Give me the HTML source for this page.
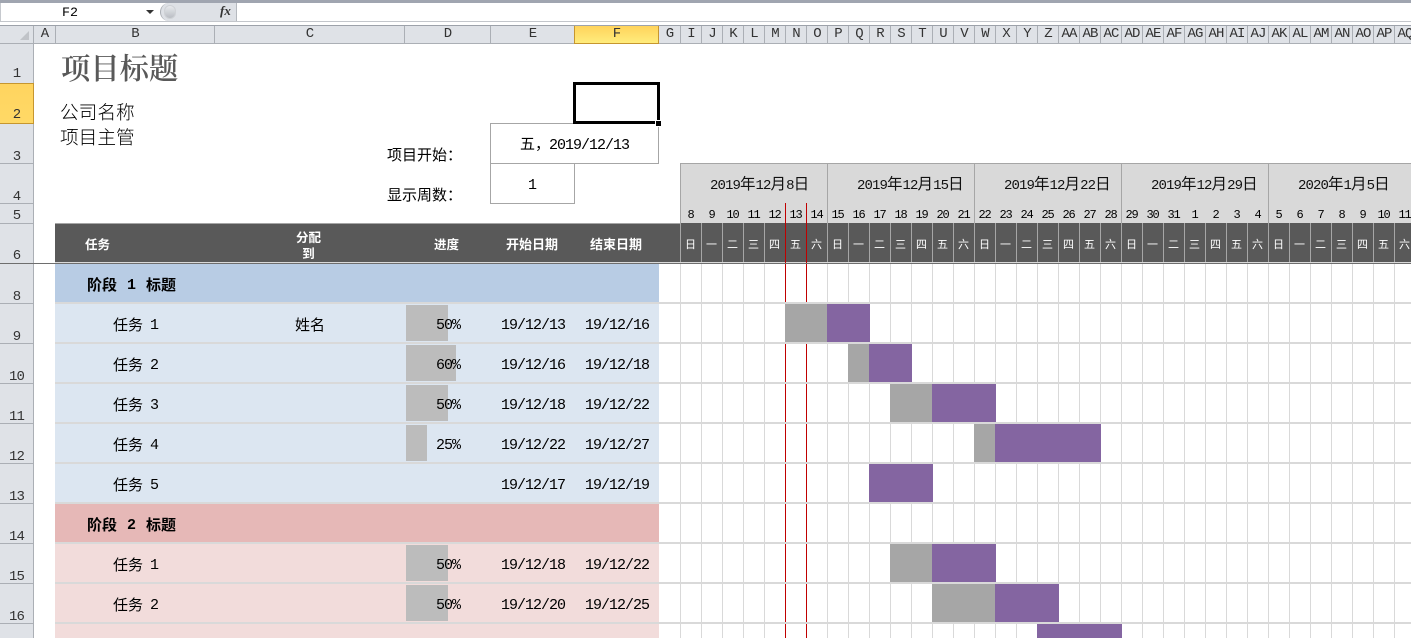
<!DOCTYPE html>
<html lang="zh-CN"><head><meta charset="utf-8"><title>项目标题</title>
<style>
html{margin:0;padding:0;width:1411px;height:638px;overflow:hidden;background:#fff}
body{margin:0;padding:0;background:#fff;width:1411px;height:638px;overflow:hidden;position:relative;font-family:"Liberation Sans","Noto Sans CJK SC",sans-serif;color:#000}
div,span{box-sizing:border-box}
.a{position:absolute}
.t{position:absolute;white-space:nowrap;font-family:"Noto Sans CJK SC",sans-serif;font-size:15px;line-height:20px;font-weight:400;z-index:6}
.m{font-family:"Liberation Mono",monospace;font-size:15px;letter-spacing:-1px}
.d{position:absolute;white-space:nowrap;font-family:"Liberation Mono",monospace;font-size:15px;letter-spacing:-1px;line-height:20px;z-index:6;margin-top:1px}
.r{position:absolute;left:0;width:33px;text-align:center;font-family:"Liberation Mono",monospace;font-size:14px;letter-spacing:-.9px;line-height:16px;color:#333;z-index:6}
.c{position:absolute;top:26px;height:17px;text-align:center;font-family:"Liberation Mono",monospace;font-size:14px;letter-spacing:-.9px;line-height:17px;color:#333;border-left:1px solid #abafb5;z-index:6}
.hl{position:absolute;left:0;width:33px;height:1px;background:#abafb5;z-index:5}
.row{position:absolute;display:flex;left:680px;width:735px}
.row span{flex:0 0 21px;width:21px;text-align:center}
.cols{top:26px;height:17px;font-family:"Liberation Mono",monospace;font-size:14px;letter-spacing:-.9px;line-height:17px;color:#333;z-index:6}
.cols span{border-left:1px solid #abafb5}
.days{top:206px;height:18px;font-family:"Liberation Mono",monospace;font-size:12px;letter-spacing:-1.2px;line-height:18px;z-index:6}
.dow{top:235px;height:18px;font-family:"Noto Sans CJK SC",sans-serif;font-size:11px;line-height:18px;color:#fff;z-index:6}
.hd{color:#fff;font-weight:700;font-size:12.5px}
.ph{font-weight:700}
.band{position:absolute;left:55px;width:604px;height:38px}
.sep{position:absolute;left:55px;width:1356px;height:2px;background:#d9d9d9;z-index:3}
.pb{position:absolute;left:406px;height:36px;background:#bcbcbc;z-index:4}
.g{position:absolute;height:38px;background:#a6a6a6;z-index:4}
.p{position:absolute;height:38px;background:#8465a1;z-index:4}
.wk{position:absolute;top:163px;width:1px;height:60px;background:#a6a6a6;z-index:2}
.wl{position:absolute;top:173px;white-space:nowrap;font-family:"Noto Sans CJK SC",sans-serif;font-size:15.5px;line-height:20px;z-index:6;color:#111}
.wl i{font-style:normal;font-family:"Liberation Mono",monospace;font-size:14px;letter-spacing:-.9px}
</style></head><body>

<!-- top chrome -->
<div class="a" style="left:0;top:0;width:1411px;height:3px;background:#a0a5b0"></div>
<div class="a" style="left:0;top:3px;width:1px;height:18px;background:#c6c9ce"></div>
<div class="t" style="left:62px;top:4px;font-family:'Liberation Mono',monospace;font-size:13.33px;">F2</div>
<svg class="a" style="left:146px;top:10px" width="9" height="5"><polygon points="0,0 8,0 4,4" fill="#333"/></svg>
<div class="a" style="left:160px;top:3px;width:77px;height:18px;background:#dee1e6;border-right:1px solid #b5b9bf;border-radius:9px 0 0 9px;border-left:1px solid #a9adb3"></div>
<div class="a" style="left:164px;top:5px;width:12px;height:14px;border-radius:7px;background:linear-gradient(#e8eaed,#b9bdc3);border:1px solid #cfd2d6"></div>
<div class="t" style="left:220px;top:1px;font-family:'Liberation Serif',serif;font-style:italic;font-weight:700;font-size:13px;color:#333">fx</div>
<div class="a" style="left:0;top:21px;width:1411px;height:1px;background:#c3c6cb"></div>
<div class="a" style="left:0;top:25px;width:1411px;height:1px;background:#9da2aa"></div>

<!-- column header -->
<div class="a" style="left:0;top:26px;width:1411px;height:17px;background:#dfe2e7"></div>
<div class="a" style="left:0;top:43px;width:1411px;height:1px;background:#abafb5;z-index:5"></div>
<svg class="a" style="left:0;top:26px;z-index:6" width="33" height="17"><polygon points="29,5 29,14 20,14" fill="#c0c3c8"/></svg>
<div class="c" style="left:33px;width:22px">A</div>
<div class="c" style="left:55px;width:159px">B</div>
<div class="c" style="left:214px;width:190px">C</div>
<div class="c" style="left:404px;width:86px">D</div>
<div class="c" style="left:490px;width:84px">E</div>
<div class="c" style="left:574px;width:85px;background:linear-gradient(#ffd35c,#ffec7c);border:1px solid #c6962f;border-top:0;height:18px;color:#333">F</div>
<div class="c" style="left:659px;width:21px;border-left:0">G</div>
<div class="a" style="left:680px;top:26px;width:1px;height:17px;background:#abafb5;z-index:6"></div>
<div class="row cols"><span>I</span><span>J</span><span>K</span><span>L</span><span>M</span><span>N</span><span>O</span><span>P</span><span>Q</span><span>R</span><span>S</span><span>T</span><span>U</span><span>V</span><span>W</span><span>X</span><span>Y</span><span>Z</span><span>AA</span><span>AB</span><span>AC</span><span>AD</span><span>AE</span><span>AF</span><span>AG</span><span>AH</span><span>AI</span><span>AJ</span><span>AK</span><span>AL</span><span>AM</span><span>AN</span><span>AO</span><span>AP</span><span>AQ</span></div>

<!-- row header -->
<div class="a" style="left:0;top:44px;width:33px;height:594px;background:#dfe2e7"></div>
<div class="a" style="left:33px;top:44px;width:1px;height:594px;background:#abafb5;z-index:5"></div>
<div class="a" style="left:0;top:83px;width:34px;height:41px;background:linear-gradient(#ffd45f,#ffd966);border:1px solid #c6962f;border-left:0;z-index:5"></div>
<div class="hl" style="top:163px"></div><div class="hl" style="top:203px"></div><div class="hl" style="top:223px"></div>
<div class="hl" style="top:303px"></div><div class="hl" style="top:343px"></div><div class="hl" style="top:383px"></div><div class="hl" style="top:423px"></div><div class="hl" style="top:463px"></div><div class="hl" style="top:503px"></div><div class="hl" style="top:543px"></div><div class="hl" style="top:583px"></div><div class="hl" style="top:623px"></div>
<div class="r" style="top:66px">1</div>
<div class="r" style="top:107px">2</div>
<div class="r" style="top:149px">3</div>
<div class="r" style="top:189px">4</div>
<div class="r" style="top:208px">5</div>
<div class="r" style="top:248px">6</div>
<div class="r" style="top:289px">8</div>
<div class="r" style="top:329px">9</div>
<div class="r" style="top:369px">10</div>
<div class="r" style="top:409px">11</div>
<div class="r" style="top:449px">12</div>
<div class="r" style="top:489px">13</div>
<div class="r" style="top:529px">14</div>
<div class="r" style="top:569px">15</div>
<div class="r" style="top:609px">16</div>

<!-- title block -->
<div class="t" style="left:61px;top:48px;font-family:'Noto Serif CJK SC',serif;font-size:29.33px;line-height:38px;color:#595959;font-weight:600">项目标题</div>
<div class="t" style="left:60px;top:100px;font-size:18.67px;line-height:24px;font-weight:300">公司名称</div>
<div class="t" style="left:60px;top:125px;font-size:18.67px;line-height:24px;font-weight:300">项目主管</div>
<div class="t" style="left:387px;top:145px;font-size:15px">项目开始：</div>
<div class="t" style="left:387px;top:185px;font-size:15px">显示周数：</div>

<div class="a" style="left:490px;top:123px;width:169px;height:41px;border:1px solid #a6a6a6"></div>
<div class="a" style="left:490px;top:163px;width:85px;height:41px;border:1px solid #a6a6a6"></div>
<div class="t" style="left:520px;top:134px;font-size:15px">五，<span class="m" style="margin-left:-1px">2019/12/13</span></div>
<div class="d" style="left:528px;top:175px">1</div>

<!-- selection -->
<div class="a" style="left:573px;top:82px;width:87px;height:42px;border:3px solid #000;z-index:8"></div>
<div class="a" style="left:655px;top:120px;width:7px;height:7px;background:#000;border:1px solid #fff;z-index:9"></div>

<!-- week header -->
<div class="a" style="left:680px;top:163px;width:731px;height:60px;background:#d9d9d9;border-top:1px solid #a6a6a6"></div>
<div class="wk" style="left:680px"></div><div class="wk" style="left:827px"></div><div class="wk" style="left:974px"></div><div class="wk" style="left:1121px"></div><div class="wk" style="left:1268px"></div>
<div class="wl" style="left:710px"><i>2019</i>年<i>12</i>月<i>8</i>日</div>
<div class="wl" style="left:857px"><i>2019</i>年<i>12</i>月<i>15</i>日</div>
<div class="wl" style="left:1004px"><i>2019</i>年<i>12</i>月<i>22</i>日</div>
<div class="wl" style="left:1151px"><i>2019</i>年<i>12</i>月<i>29</i>日</div>
<div class="wl" style="left:1298px"><i>2020</i>年<i>1</i>月<i>5</i>日</div>
<div class="row days"><span>8</span><span>9</span><span>10</span><span>11</span><span>12</span><span>13</span><span>14</span><span>15</span><span>16</span><span>17</span><span>18</span><span>19</span><span>20</span><span>21</span><span>22</span><span>23</span><span>24</span><span>25</span><span>26</span><span>27</span><span>28</span><span>29</span><span>30</span><span>31</span><span>1</span><span>2</span><span>3</span><span>4</span><span>5</span><span>6</span><span>7</span><span>8</span><span>9</span><span>10</span><span>11</span></div>

<!-- dark header -->
<div class="a" style="left:55px;top:223px;width:625px;height:39px;background:#595959;border-top:1px solid #a6a6a6"></div>
<div class="a" style="left:680px;top:223px;width:731px;height:39px;background:#595959"></div>
<div class="a" style="left:680px;top:223px;width:731px;height:39px;background:repeating-linear-gradient(to right,#a6a6a6 0,#a6a6a6 1px,transparent 1px,transparent 21px);z-index:1"></div>
<div class="a" style="left:55px;top:262px;width:1356px;height:1px;background:#d9d9d9"></div>
<div class="a" style="left:0;top:263px;width:1411px;height:1px;background:#6e6e6e;z-index:5"></div>
<div class="t hd" style="left:85px;top:234px">任务</div>
<div class="t hd" style="left:296px;top:229px;line-height:16px;text-align:center;font-size:12.5px">分配<br>到</div>
<div class="t hd" style="left:434px;top:234px">进度</div>
<div class="t hd" style="left:506px;top:234px;font-size:13px">开始日期</div>
<div class="t hd" style="left:590px;top:234px;font-size:13px">结束日期</div>
<div class="row dow"><span>日</span><span>一</span><span>二</span><span>三</span><span>四</span><span>五</span><span>六</span><span>日</span><span>一</span><span>二</span><span>三</span><span>四</span><span>五</span><span>六</span><span>日</span><span>一</span><span>二</span><span>三</span><span>四</span><span>五</span><span>六</span><span>日</span><span>一</span><span>二</span><span>三</span><span>四</span><span>五</span><span>六</span><span>日</span><span>一</span><span>二</span><span>三</span><span>四</span><span>五</span><span>六</span></div>

<!-- grid -->
<div class="a" style="left:680px;top:264px;width:731px;height:374px;background:repeating-linear-gradient(to right,#d9d9d9 0,#d9d9d9 1px,transparent 1px,transparent 21px)"></div>
<div class="a" style="left:785px;top:203px;width:1px;height:435px;background:#c00000;z-index:2"></div>
<div class="a" style="left:806px;top:203px;width:1px;height:435px;background:#c00000;z-index:2"></div>

<!-- bands -->
<div class="band" style="top:264px;background:#b8cce4"></div>
<div class="band" style="top:304px;background:#dce6f1"></div>
<div class="band" style="top:344px;background:#dce6f1"></div>
<div class="band" style="top:384px;background:#dce6f1"></div>
<div class="band" style="top:424px;background:#dce6f1"></div>
<div class="band" style="top:464px;background:#dce6f1"></div>
<div class="band" style="top:504px;background:#e6b8b7"></div>
<div class="band" style="top:544px;background:#f2dcdb"></div>
<div class="band" style="top:584px;background:#f2dcdb"></div>
<div class="band" style="top:624px;background:#f2dcdb;height:14px"></div>

<div class="sep" style="top:302px"></div><div class="sep" style="top:342px"></div><div class="sep" style="top:382px"></div><div class="sep" style="top:422px"></div><div class="sep" style="top:462px"></div><div class="sep" style="top:502px"></div><div class="sep" style="top:542px"></div><div class="sep" style="top:582px"></div><div class="sep" style="top:622px"></div>

<!-- progress bars -->
<div class="pb" style="top:305px;width:42px"></div>
<div class="pb" style="top:345px;width:50px"></div>
<div class="pb" style="top:385px;width:42px"></div>
<div class="pb" style="top:425px;width:21px"></div>
<div class="pb" style="top:545px;width:42px"></div>
<div class="pb" style="top:585px;width:42px"></div>

<!-- gantt bars -->
<div class="g" style="top:304px;left:785px;width:42px"></div><div class="p" style="top:304px;left:827px;width:43px"></div>
<div class="g" style="top:344px;left:848px;width:21px"></div><div class="p" style="top:344px;left:869px;width:43px"></div>
<div class="g" style="top:384px;left:890px;width:42px"></div><div class="p" style="top:384px;left:932px;width:64px"></div>
<div class="g" style="top:424px;left:974px;width:21px"></div><div class="p" style="top:424px;left:995px;width:106px"></div>
<div class="p" style="top:464px;left:869px;width:64px"></div>
<div class="g" style="top:544px;left:890px;width:42px"></div><div class="p" style="top:544px;left:932px;width:64px"></div>
<div class="g" style="top:584px;left:932px;width:63px"></div><div class="p" style="top:584px;left:995px;width:64px"></div>
<div class="p" style="top:624px;left:1037px;width:85px;height:14px"></div>

<!-- phase titles -->
<div class="t ph" style="left:87px;top:275px">阶段</div><div class="d ph" style="left:127px;top:275px">1</div><div class="t ph" style="left:146px;top:275px">标题</div>
<div class="t ph" style="left:87px;top:515px">阶段</div><div class="d ph" style="left:127px;top:515px">2</div><div class="t ph" style="left:146px;top:515px">标题</div>

<!-- tasks -->
<div class="t" style="left:113px;top:315px">任务</div><div class="d" style="left:150px;top:315px">1</div><div class="t" style="left:295px;top:315px">姓名</div><div class="d" style="left:436px;top:315px">50%</div><div class="d" style="left:501px;top:315px">19/12/13</div><div class="d" style="left:585px;top:315px">19/12/16</div>
<div class="t" style="left:113px;top:355px">任务</div><div class="d" style="left:150px;top:355px">2</div><div class="d" style="left:436px;top:355px">60%</div><div class="d" style="left:501px;top:355px">19/12/16</div><div class="d" style="left:585px;top:355px">19/12/18</div>
<div class="t" style="left:113px;top:395px">任务</div><div class="d" style="left:150px;top:395px">3</div><div class="d" style="left:436px;top:395px">50%</div><div class="d" style="left:501px;top:395px">19/12/18</div><div class="d" style="left:585px;top:395px">19/12/22</div>
<div class="t" style="left:113px;top:435px">任务</div><div class="d" style="left:150px;top:435px">4</div><div class="d" style="left:436px;top:435px">25%</div><div class="d" style="left:501px;top:435px">19/12/22</div><div class="d" style="left:585px;top:435px">19/12/27</div>
<div class="t" style="left:113px;top:475px">任务</div><div class="d" style="left:150px;top:475px">5</div><div class="d" style="left:501px;top:475px">19/12/17</div><div class="d" style="left:585px;top:475px">19/12/19</div>
<div class="t" style="left:113px;top:555px">任务</div><div class="d" style="left:150px;top:555px">1</div><div class="d" style="left:436px;top:555px">50%</div><div class="d" style="left:501px;top:555px">19/12/18</div><div class="d" style="left:585px;top:555px">19/12/22</div>
<div class="t" style="left:113px;top:595px">任务</div><div class="d" style="left:150px;top:595px">2</div><div class="d" style="left:436px;top:595px">50%</div><div class="d" style="left:501px;top:595px">19/12/20</div><div class="d" style="left:585px;top:595px">19/12/25</div>
<div class="t" style="left:113px;top:636px">任务</div>
</body></html>
